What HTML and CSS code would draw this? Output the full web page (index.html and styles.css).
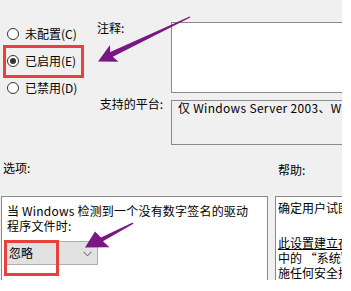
FILE: index.html
```html
<!DOCTYPE html>
<html lang="zh-CN">
<head>
<meta charset="utf-8">
<link rel="stylesheet" href="styles.css">
</head>
<body>
<div class="dialog">
  <div class="top">
    <div class="radios">
      <label class="radio"><span class="dot"></span>未配置(C)</label>
      <label class="radio"><span class="dot on"></span>已启用(E)</label>
      <label class="radio"><span class="dot"></span>已禁用(D)</label>
    </div>
    <div class="fields">
      <div class="lbl lbl-comment">注释:</div>
      <div class="box comment"></div>
      <div class="lbl lbl-platform">支持的平台:</div>
      <div class="box platform">仅 Windows Server 2003、Windows XP SP1</div>
    </div>
  </div>
  <div class="heads">
    <div class="head-opt">选项:</div>
    <div class="head-help">帮助:</div>
  </div>
  <div class="panels">
    <div class="panel options">
      <div class="opt-text">当 Windows 检测到一个没有数字签名的驱动<br>程序文件时:</div>
      <div class="combo"><span>忽略</span>
        <svg class="chev" width="9" height="6" viewBox="0 0 9 6"><path d="M0.5 0.8 L4.5 4.8 L8.5 0.8" fill="none" stroke="#555" stroke-width="1"/></svg>
      </div>
    </div>
    <div class="panel help">
      <div class="hl">确定用户试图安装</div>
      <div class="hl gap"></div>
      <div class="hl ul">此设置建立在用户</div>
      <div class="hl">中的 “系统” 设</div>
      <div class="hl">施任何安全措施</div>
    </div>
  </div>

  <div class="mark mark1"></div>
  <div class="mark mark2"></div>
  <svg class="arrows" width="342" height="280" viewBox="0 0 342 280">
    <polygon fill="#7b1784" points="98,61.5 118.5,61.8 112.8,56.8 190.3,17.6 189.7,16.4 110.2,52 110,45"/>
    <polygon fill="#7b1784" points="85,247.5 109.5,247.2 103,241.3 133.4,223.7 132.7,222.5 101,237.5 95,231.5"/>
  </svg>
</div>
</body>
</html>
```
FILE: styles.css
```css
html, body {
  margin: 0;
  padding: 0;
  background: #ffffff;
}
body {
  font-family: "Noto Sans CJK SC", "Noto Sans", sans-serif;
  font-size: 12px;
  color: #000;
}
.dialog {
  position: relative;
  width: 342px;
  height: 280px;
  background: #f0f0f0;
  overflow: hidden;
}
.top {
  display: flex;
  padding-top: 20px;
}
.radios {
  width: 90px;
  padding-left: 7px;
  display: flex;
  flex-direction: column;
  flex-shrink: 0;
}
.radio {
  display: flex;
  align-items: center;
  height: 27px;
  line-height: 14px;
}
.dot {
  box-sizing: border-box;
  width: 12px;
  height: 12px;
  border: 1px solid #333;
  border-radius: 50%;
  background: #fff;
  margin-right: 6px;
  display: flex;
  align-items: center;
  justify-content: center;
}
.dot.on::after {
  content: "";
  width: 6px;
  height: 6px;
  border-radius: 50%;
  background: #333;
}
.fields {
  display: grid;
  grid-template-columns: 66px 210px;
  column-gap: 8px;
  row-gap: 7px;
  padding-top: 2px;
  flex-shrink: 0;
}
.lbl {
  line-height: 16px;
  white-space: nowrap;
}
.lbl-comment {
  margin-top: -2px;
}
.lbl-platform {
  text-align: right;
  margin-top: -4px;
}
.box {
  box-sizing: border-box;
  border: 1px solid #8a8a8a;
}
.comment {
  height: 71px;
  background: #fff;
}
.platform {
  height: 45px;
  background: #f0f0f0;
  padding: 0 6px;
  line-height: 13px;
  letter-spacing: 0.3px;
  white-space: nowrap;
  overflow: hidden;
}
.heads {
  display: flex;
  margin-top: 15px;
  height: 16px;
  line-height: 16px;
}
.head-opt {
  padding-left: 3px;
  width: 275px;
}
.head-help {
  padding-top: 2px;
}
.panels {
  display: flex;
  margin-top: 20px;
  gap: 7px;
  padding-left: 1px;
}
.panel {
  box-sizing: border-box;
  height: 100px;
  border: 1px solid #8a8a8a;
  background: #fff;
  flex-shrink: 0;
}
.options {
  width: 267px;
  padding: 6px 0 0 3px;
}
.opt-text {
  line-height: 15px;
  padding-left: 2px;
  letter-spacing: 0.2px;
  white-space: nowrap;
}
.combo {
  box-sizing: border-box;
  margin-top: 8px;
  width: 93px;
  height: 24px;
  background: #e1e1e1;
  border: 1px solid #adadad;
  display: flex;
  align-items: center;
  justify-content: space-between;
  padding: 0 5px 0 3px;
  line-height: 14px;
}
.chev {
  display: block;
  margin-top: 1px;
}
.help {
  width: 100px;
  padding: 3px 0 0 2px;
  overflow: hidden;
}
.hl {
  line-height: 15px;
  height: 15px;
  white-space: nowrap;
}
.hl.gap {
  height: 20px;
}
.hl.ul {
  text-decoration: underline;
}
.mark {
  position: absolute;
  box-sizing: border-box;
  border: 3px solid #e8403f;
}
.mark1 {
  left: 3px;
  top: 45px;
  width: 81px;
  height: 33px;
}
.mark2 {
  left: 4px;
  top: 240px;
  width: 55px;
  height: 36px;
}
.arrows {
  position: absolute;
  left: 0;
  top: 0;
  pointer-events: none;
}
```
